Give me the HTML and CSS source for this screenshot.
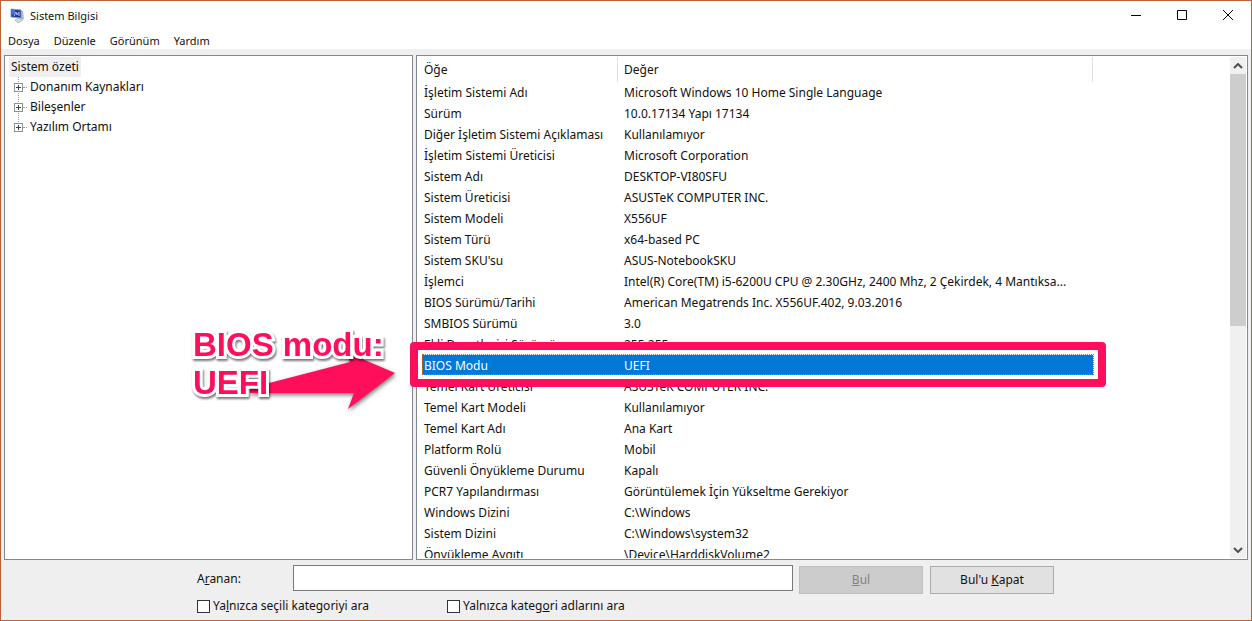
FILE: index.html
```html
<!DOCTYPE html>
<html lang="tr">
<head>
<meta charset="utf-8">
<title>Sistem Bilgisi</title>
<link rel="stylesheet" href="styles.css">
</head>
<body>
<div class="window">
  <header class="titlebar">
    <svg class="app-icon" viewBox="0 0 16 16" aria-hidden="true">
      <path d="M6 12 12 9 14 12 9 15Z" fill="#d4d9e2" stroke="#9aa3b5" stroke-width=".6"/>
      <path d="M11 2 14 3 15 11 11 12Z" fill="#aeb9d2"/>
      <path d="M2 1 12 2 12 10 2 9Z" fill="#1d3c9c" stroke="#8497c9" stroke-width=".8"/>
      <path d="M2 1 6 2 6 5 3 7Z" fill="#4d72d2"/>
      <path d="M5 8 7 4 8 7 10 4 10 8" fill="none" stroke="#a9c3f5"/>
    </svg>
    <h1 class="title">Sistem Bilgisi</h1>
    <div class="caption-buttons">
      <button class="caption-button" aria-label="Simge durumuna küçült"><svg viewBox="0 0 12 12"><path d="M1 5.5H11"/></svg></button>
      <button class="caption-button" aria-label="Ekranı kapla"><svg viewBox="0 0 12 12"><path d="M1.5 .5H10.5V9.5H1.5Z"/></svg></button>
      <button class="caption-button" aria-label="Kapat"><svg viewBox="0 0 12 12"><path d="M1 0 11 10M11 0 1 10"/></svg></button>
    </div>
  </header>
  <nav class="menubar">
    <button class="menu">Dosya</button>
    <button class="menu">Düzenle</button>
    <button class="menu">Görünüm</button>
    <button class="menu">Yardım</button>
  </nav>
  <main class="panes">
    <section class="pane tree-pane">
      <div class="tree-root">Sistem özeti</div>
      <ul class="tree">
        <li class="node"><button class="expander" aria-label="Genişlet"></button><span class="node-name">Donanım Kaynakları</span></li>
        <li class="node"><button class="expander" aria-label="Genişlet"></button><span class="node-name">Bileşenler</span></li>
        <li class="node"><button class="expander" aria-label="Genişlet"></button><span class="node-name">Yazılım Ortamı</span></li>
      </ul>
    </section>
    <section class="pane list-pane">
      <div class="list">
        <table class="details">
          <colgroup><col class="col-item"><col class="col-value"></colgroup>
          <thead><tr><th>Öğe</th><th>Değer</th></tr></thead>
          <tbody>
            <tr><td>İşletim Sistemi Adı</td><td>Microsoft Windows 10 Home Single Language</td></tr>
            <tr><td>Sürüm</td><td>10.0.17134 Yapı 17134</td></tr>
            <tr><td>Diğer İşletim Sistemi Açıklaması</td><td>Kullanılamıyor</td></tr>
            <tr><td>İşletim Sistemi Üreticisi</td><td>Microsoft Corporation</td></tr>
            <tr><td>Sistem Adı</td><td>DESKTOP-VI80SFU</td></tr>
            <tr><td>Sistem Üreticisi</td><td>ASUSTeK COMPUTER INC.</td></tr>
            <tr><td>Sistem Modeli</td><td>X556UF</td></tr>
            <tr><td>Sistem Türü</td><td>x64-based PC</td></tr>
            <tr><td>Sistem SKU'su</td><td>ASUS-NotebookSKU</td></tr>
            <tr><td>İşlemci</td><td>Intel(R) Core(TM) i5-6200U CPU @ 2.30GHz, 2400 Mhz, 2 Çekirdek, 4 Mantıksa...</td></tr>
            <tr><td>BIOS Sürümü/Tarihi</td><td>American Megatrends Inc. X556UF.402, 9.03.2016</td></tr>
            <tr><td>SMBIOS Sürümü</td><td>3.0</td></tr>
            <tr><td>Ekli Denetleyici Sürümü</td><td>255.255</td></tr>
            <tr class="selected"><td>BIOS Modu</td><td>UEFI</td></tr>
            <tr><td>Temel Kart Üreticisi</td><td>ASUSTeK COMPUTER INC.</td></tr>
            <tr><td>Temel Kart Modeli</td><td>Kullanılamıyor</td></tr>
            <tr><td>Temel Kart Adı</td><td>Ana Kart</td></tr>
            <tr><td>Platform Rolü</td><td>Mobil</td></tr>
            <tr><td>Güvenli Önyükleme Durumu</td><td>Kapalı</td></tr>
            <tr><td>PCR7 Yapılandırması</td><td>Görüntülemek İçin Yükseltme Gerekiyor</td></tr>
            <tr><td>Windows Dizini</td><td>C:\Windows</td></tr>
            <tr><td>Sistem Dizini</td><td>C:\Windows\system32</td></tr>
            <tr><td>Önyükleme Aygıtı</td><td>\Device\HarddiskVolume2</td></tr>
          </tbody>
        </table>
      </div>
      <div class="scrollbar">
        <button class="scroll-button" aria-label="Yukarı kaydır"><svg viewBox="0 0 10 6"><path d="M1 5 5 1 9 5"/></svg></button>
        <div class="track"><div class="thumb"></div></div>
        <button class="scroll-button" aria-label="Aşağı kaydır"><svg viewBox="0 0 10 6"><path d="M1 1 5 5 9 1"/></svg></button>
      </div>
    </section>
  </main>
  <form class="find">
    <div class="find-row">
      <label class="find-label" for="query">A<u>r</u>anan:</label>
      <input class="find-input" id="query" type="text">
      <div class="find-buttons">
        <button class="find-button" type="button" disabled><u>B</u>ul</button>
        <button class="find-button" type="button">Bul'u <u>K</u>apat</button>
      </div>
    </div>
    <div class="options">
      <label class="option"><input type="checkbox"><span>Ya<u>l</u>nızca seçili kategoriyi ara</span></label>
      <label class="option"><input type="checkbox"><span>Yalnızca kateg<u>o</u>ri adlarını ara</span></label>
    </div>
  </form>
  <div class="highlight"></div>
  <svg class="arrow" viewBox="0 0 160 64" aria-hidden="true"><path d="M8 42 108 16 104 6 153 27 106 63 112 47 8 47Z"/></svg>
  <p class="callout">BIOS modu:<br>UEFI</p>
</div>
</body>
</html>
```
FILE: styles.css
```css
* {
  box-sizing: border-box;
}

body {
  margin: 0;
  font: 12px/20px "Noto Sans", "Open Sans", sans-serif;
  color: #111;
}

button,
input {
  font: inherit;
  color: inherit;
}

.window {
  position: relative;
  display: flex;
  flex-direction: column;
  height: 100vh;
  border: 1px solid #bd6237;
  background: #efefef;
}

.titlebar {
  display: flex;
  align-items: center;
  height: 30px;
  padding-left: 8px;
  background: #fff;
}

.app-icon {
  width: 16px;
  height: 16px;
}

.title {
  margin: 0 auto 0 5px;
  font-size: 11px;
  font-weight: 400;
}

.caption-buttons {
  display: flex;
}

.caption-button {
  display: flex;
  align-items: center;
  justify-content: center;
  width: 46px;
  height: 28px;
  padding: 0;
  border: 0;
  background: none;
}

.caption-button svg {
  width: 12px;
  height: 12px;
  overflow: visible;
  fill: none;
  stroke: #000;
}

.menubar {
  display: flex;
  gap: 14px;
  height: 18px;
  padding-left: 7px;
  background: #fff;
}

.menu {
  padding: 0;
  border: 0;
  background: none;
  font-size: 11px;
  line-height: 20px;
}

.panes {
  display: flex;
  flex: 1;
  gap: 3px;
  min-height: 0;
  padding: 6px 3px 0;
}

.pane {
  border: 1px solid #828790;
  background: #fff;
}

.tree-pane {
  flex: 0 0 409px;
  padding: 1px 4px;
}

.tree-root {
  width: max-content;
  padding: 0 2px;
  background: #efefef;
}

.tree {
  margin: 0 0 0 9px;
  padding: 0;
  list-style: none;
  background: repeating-linear-gradient(#999 0 1px, transparent 1px 2px) 0 0 / 1px 50px no-repeat;
}

.node {
  display: flex;
  align-items: center;
  height: 20px;
  white-space: nowrap;
}

.expander {
  width: 9px;
  height: 9px;
  margin-left: -4px;
  padding: 0;
  border: 1px solid #919191;
  background:
    linear-gradient(#345 0 0) center / 5px 1px no-repeat,
    linear-gradient(#345 0 0) center / 1px 5px no-repeat,
    #fff;
}

.node-name {
  display: flex;
  align-items: center;
  gap: 3px;
}

.node-name::before {
  width: 4px;
  border-top: 1px dotted #999;
  content: "";
}

.list-pane {
  display: flex;
  flex: 1;
  min-width: 0;
  padding: 1px;
  padding-left: 0;
}

.list {
  flex: 1;
  min-width: 0;
  overflow: hidden;
}

.details {
  width: 676px;
  border-collapse: separate;
  border-spacing: 0;
  table-layout: fixed;
  line-height: 20px;
}

.col-item {
  width: 201px;
}

.details th,
.details td {
  height: 21px;
  padding: 0 0 0 7px;
  overflow: hidden;
  text-align: left;
  font-weight: 400;
  white-space: nowrap;
}

.details th {
  height: 25px;
  border-right: 1px solid #e0e0e0;
}

.details td + td,
.details th + th {
  padding-left: 6px;
}

.selected td {
  background: #0078d7;
  color: #fff;
}

.scrollbar {
  display: flex;
  flex-direction: column;
  width: 16px;
  background: #f0f0f0;
}

.scroll-button {
  display: flex;
  align-items: center;
  justify-content: center;
  height: 17px;
  padding: 0;
  border: 0;
  background: none;
}

.scroll-button svg {
  width: 10px;
  height: 6px;
  fill: none;
  stroke: #505050;
  stroke-width: 2;
}

.track {
  flex: 1;
}

.thumb {
  height: 54%;
  background: #cdcdcd;
}

.find {
  display: flex;
  flex-direction: column;
  align-self: center;
  gap: 2px;
  width: 858px;
  max-width: 100%;
  height: 60px;
  padding-top: 5px;
}

.find-row {
  display: flex;
  gap: 6px;
}

.find-label {
  width: 90px;
  line-height: 28px;
}

.find-input {
  flex: 1;
  min-width: 0;
  max-width: 500px;
  height: 26px;
  border: 1px solid #7a7a7a;
  background: #fff;
}

.find-buttons {
  display: flex;
  gap: 7px;
}

.find-button {
  width: 124px;
  height: 28px;
  margin-top: 1px;
  padding: 0;
  border: 1px solid #adadad;
  background: #e1e1e1;
}

.find-button:disabled {
  border-color: #bfbfbf;
  background: #ccc;
  color: #838383;
}

.options {
  display: flex;
}

.option {
  display: flex;
  align-items: center;
  gap: 3px;
  width: 250px;
}

.option input {
  appearance: none;
  width: 13px;
  height: 13px;
  margin: 0;
  border: 1px solid #333;
  background: #fff;
}

.highlight {
  position: absolute;
  top: 341px;
  left: 409px;
  width: 696px;
  height: 45px;
  border: 8px solid #ff0f5b;
  border-radius: 4px;
  box-shadow: inset 0 0 0 4px #fff;
}

.highlight::after {
  position: absolute;
  inset: 4px;
  border: 1px dotted #b87838;
  content: "";
}

.arrow {
  position: absolute;
  top: 345px;
  left: 241px;
  width: 160px;
  height: 64px;
  overflow: visible;
  fill: #ff0f5b;
  filter: drop-shadow(1px 2px 2px #0008);
}

.callout {
  position: absolute;
  top: 325px;
  left: 192px;
  margin: 0;
  color: #ff0f5b;
  font: bold 33px/38px "Liberation Sans", Arial, sans-serif;
  -webkit-text-stroke: 6px #fff;
  paint-order: stroke fill;
  filter: drop-shadow(1px 2px 1px #0008);
}
```
